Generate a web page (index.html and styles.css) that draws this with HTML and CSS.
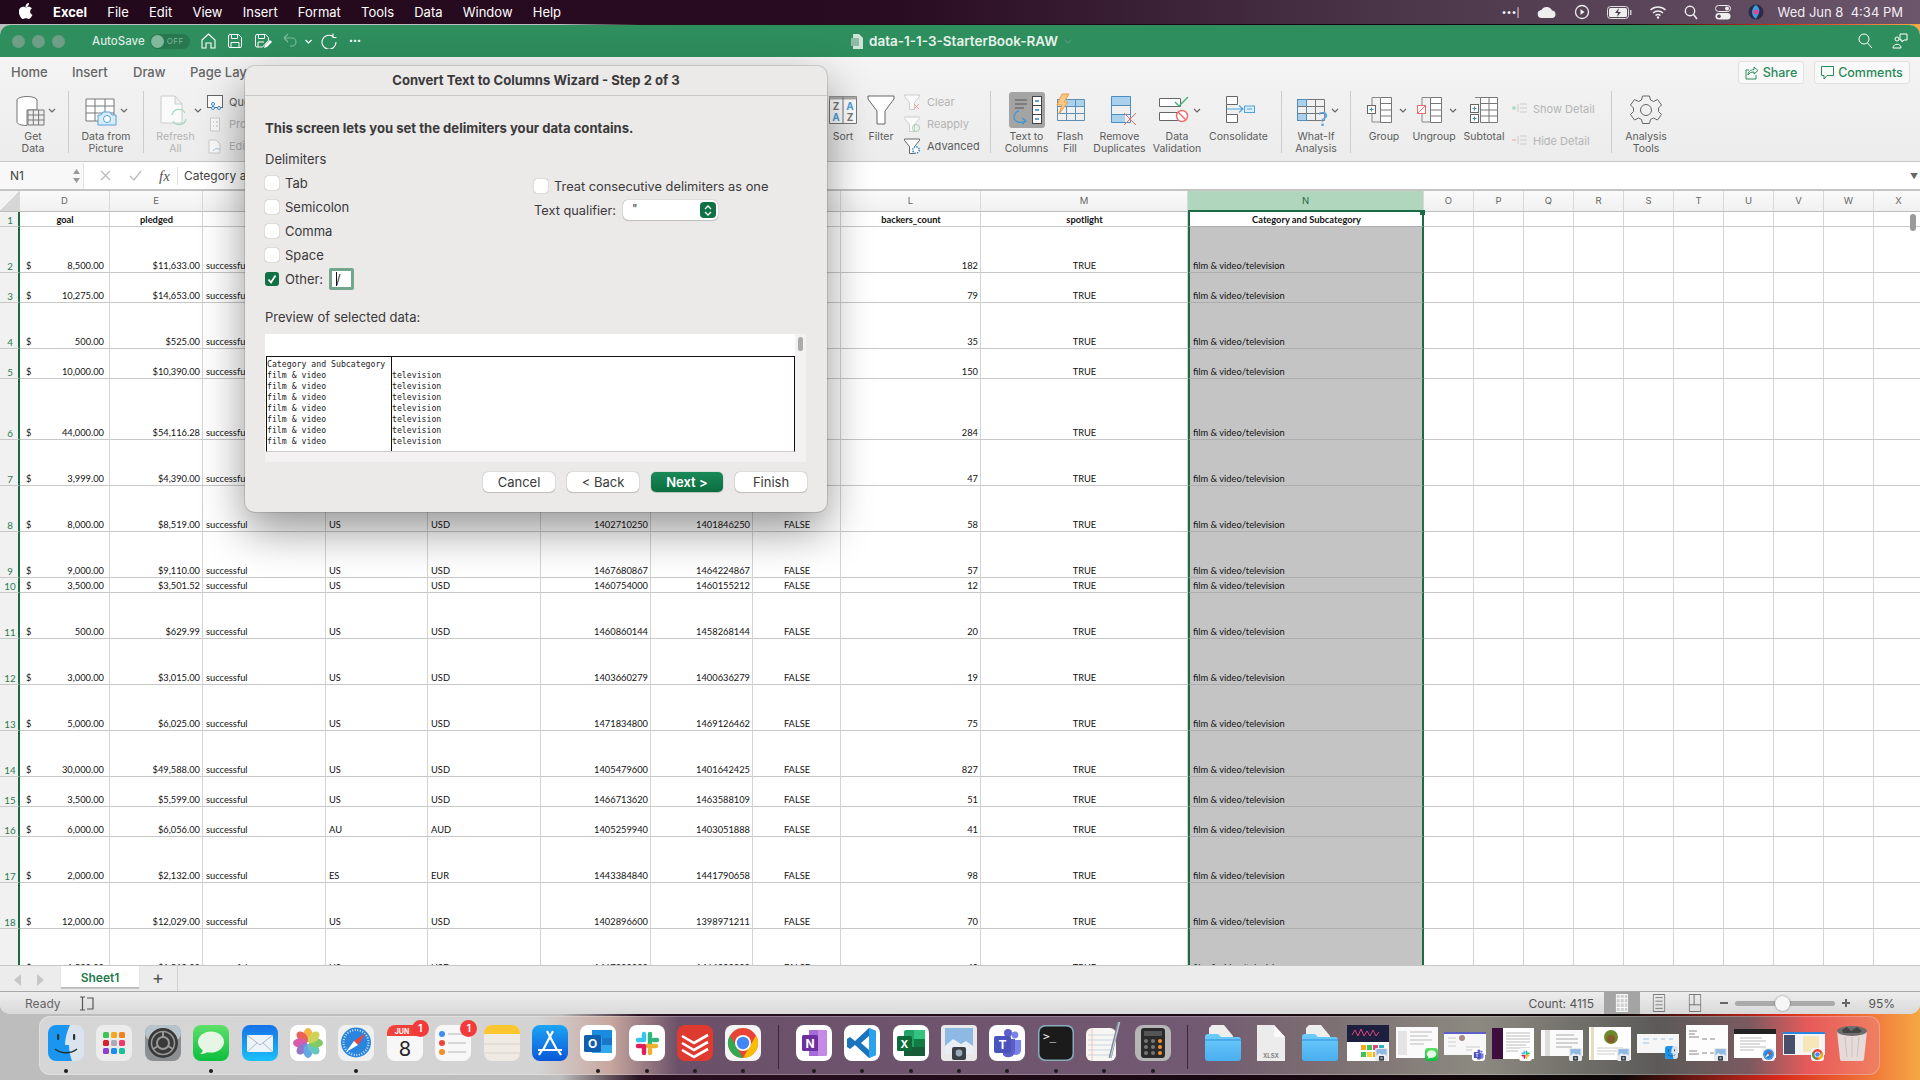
FILE: index.html
```html
<!DOCTYPE html>
<html>
<head>
<meta charset="utf-8">
<title>data-1-1-3-StarterBook-RAW</title>
<link rel="stylesheet" href="styles.css">
</head>
<body>

<!-- shared icons -->
<svg class="sprite" xmlns="http://www.w3.org/2000/svg">
  <defs>
    <linearGradient id="gBlue" x1="0" y1="0" x2="0" y2="1"><stop offset="0" stop-color="#1671e8"/><stop offset="1" stop-color="#1cc0fa"/></linearGradient>
    <linearGradient id="gGreen" x1="0" y1="0" x2="0" y2="1"><stop offset="0" stop-color="#5ee06a"/><stop offset="1" stop-color="#0cbe3e"/></linearGradient>
    <linearGradient id="gFolder" x1="0" y1="0" x2="0" y2="1"><stop offset="0" stop-color="#6cccfb"/><stop offset="1" stop-color="#4aaef0"/></linearGradient>
    <linearGradient id="gStore" x1="0" y1="0" x2="0" y2="1"><stop offset="0" stop-color="#1ca4f5"/><stop offset="1" stop-color="#0a58d8"/></linearGradient>
  </defs>
  <symbol id="i-finder" viewBox="0 0 36 36">
    <rect width="36" height="36" rx="8" fill="#dbe4ee"/>
    <path d="M8 0h14c-3 7-5 13-5 20h4c0 5 1 11 3 16H8a8 8 0 0 1-8-8V8a8 8 0 0 1 8-8z" fill="#1b96f0"/>
    <rect x="9" y="9" width="2.2" height="6" rx="1" fill="#233"/><rect x="25" y="9" width="2.2" height="6" rx="1" fill="#233"/>
    <path d="M7 24c6 5 16 5 22 0" fill="none" stroke="#233" stroke-width="1.4"/>
  </symbol>
  <symbol id="i-msg" viewBox="0 0 36 36">
    <rect width="36" height="36" rx="8" fill="url(#gGreen)"/>
    <ellipse cx="18" cy="17" rx="13" ry="10.5" fill="#e7f5e5"/><path d="M10 23c0 3-1 5-3 6 4 0 7-1 9-3z" fill="#e7f5e5"/>
  </symbol>
  <symbol id="i-safari" viewBox="0 0 36 36">
    <rect width="36" height="36" rx="8" fill="#f0f0f0"/>
    <circle cx="18" cy="17.5" r="15" fill="#2a86dd"/><circle cx="18" cy="17.5" r="12.5" fill="none" stroke="#cfe6fa" stroke-width="2" stroke-dasharray="1 1.6"/>
    <path d="M28 8 16 16l4 4z" fill="#f0443a"/><path d="M8 27l12-7-4-4z" fill="#fff"/>
  </symbol>
  <symbol id="i-slack" viewBox="0 0 36 36">
    <rect width="36" height="36" rx="8" fill="#fff"/>
    <g stroke-width="4.4" stroke-linecap="round" fill="none">
      <path d="M15 9v6M15 15H9" stroke="#36c5f0"/><path d="M21 9v10M28 15h-3" stroke="#2eb67d"/>
      <path d="M27 21h-8M21 28v-3" stroke="#ecb22e"/><path d="M9 21h3M15 21v7" stroke="#e01e5a"/>
    </g>
  </symbol>
  <symbol id="i-teams" viewBox="0 0 36 36">
    <rect width="36" height="36" rx="8" fill="#fff"/>
    <circle cx="26" cy="10" r="3.4" fill="#7b83eb"/><circle cx="19" cy="8" r="4" fill="#5b5fc7"/>
    <path d="M23 15h9v10a5 5 0 0 1-9 3z" fill="#7b83eb"/><path d="M14 14h12v13a7 7 0 0 1-12 3z" fill="#5b5fc7"/>
    <rect x="5" y="11" width="17" height="17" rx="2" fill="#4b53bc"/><text x="13.5" y="24" class="ic-t" fill="#fff" font-size="12" text-anchor="middle">T</text>
  </symbol>
  <symbol id="i-chrome" viewBox="0 0 36 36">
    <rect width="36" height="36" rx="8" fill="#f4f4f4"/>
    <circle cx="18" cy="18" r="15" fill="#e94335"/>
    <path d="M5 10.5 18 33A15 15 0 0 1 5 10.5z" fill="#33a852"/><path d="M18 33 31 10.5A15 15 0 0 1 18 33z" fill="#fbbc04"/>
    <circle cx="18" cy="18" r="8" fill="#fff"/><circle cx="18" cy="18" r="6.2" fill="#4285f4"/>
  </symbol>
  <symbol id="i-preview" viewBox="0 0 36 36">
    <rect width="36" height="36" rx="4" fill="#e8e8e8"/><rect x="4" y="3" width="28" height="18" fill="#8db9e4"/><path d="M4 21l8-7 8 5 5-3 7 5v8H4z" fill="#e8eef4"/>
    <rect x="11" y="22" width="14" height="13" rx="2" fill="#3b3f46"/><circle cx="18" cy="28" r="3.4" fill="#9ab"/>
  </symbol>
  <symbol id="i-folder" viewBox="0 0 36 36">
    <path d="M7 0h12l9 11v8H4V3z" fill="#eee"/>
    <path d="M0 12a3 3 0 0 1 3-3h10l3 3h17a3 3 0 0 1 3 3v18a3 3 0 0 1-3 3H3a3 3 0 0 1-3-3z" fill="url(#gFolder)"/>
    <path d="M0 15h36" stroke="#2f8fd8" stroke-width="1"/>
  </symbol>
</svg>

<div class="menubar">
  <svg class="apple" width="14" height="16" viewBox="0 0 14 16"><path d="M10 0c.1 1.200-.4 2.200-1 3-.7.8-1.700 1.300-2.600 1.200C6.300 3 6.800 2 7.400 1.300 8.100.5 9.200 0 10 0zM13.500 11.800c-.4.900-.6 1.300-1.100 2-.7 1-1.600 2.200-2.800 2.200-1 0-1.300-.7-2.700-.7s-1.700.7-2.700.7c-1.100 0-2-1.100-2.700-2.100C-.4 11-.600 7.600.6 5.800c.8-1.300 2.100-2 3.300-2 1.300 0 2 .7 3 .7 1 0 1.600-.7 3-.7 1.100 0 2.200.6 3 1.600-2.600 1.500-2.200 5.300.6 6.400z" fill="#fff"/></svg>
  <nav class="appmenu">
    <b>Excel</b><span>File</span><span>Edit</span><span>View</span><span>Insert</span><span>Format</span><span>Tools</span><span>Data</span><span>Window</span><span>Help</span>
  </nav>
  <div class="status-icons">
    <span class="dots3">•••|</span>
    <svg width="20" height="14" viewBox="0 0 20 14"><path d="M5 13a4 4 0 0 1-.6-8A6 6 0 0 1 15 5.500 3.800 3.800 0 0 1 15.500 13z" fill="#eee"/></svg>
    <svg width="16" height="16" viewBox="0 0 16 16"><circle cx="8" cy="8" r="6.500" fill="none" stroke="#eee" stroke-width="1.300"/><path d="M6.500 5v6l4-3z" fill="#eee"/></svg>
    <svg width="25" height="13" viewBox="0 0 25 13"><rect x=".5" y=".5" width="21" height="12" rx="3" fill="none" stroke="#ddd"/><rect x="2" y="2" width="18" height="9" rx="1.500" fill="#eee"/><path d="M12 2 8 7h3l-1 4 4-5h-3z" fill="#4a3a4a"/><rect x="23" y="4" width="1.500" height="5" fill="#ccc"/></svg>
    <svg width="18" height="14" viewBox="0 0 18 14"><path d="M1.500 5a11 11 0 0 1 15 0M4 8a7 7 0 0 1 10 0M6.500 10.500a3.500 3.500 0 0 1 5 0" fill="none" stroke="#eee" stroke-width="1.500"/><circle cx="9" cy="12.500" r="1.200" fill="#eee"/></svg>
    <svg width="14" height="15" viewBox="0 0 14 15"><circle cx="6" cy="6" r="4.700" fill="none" stroke="#eee" stroke-width="1.400"/><path d="M9.500 9.500 13 14" stroke="#eee" stroke-width="1.500"/></svg>
    <svg width="16" height="15" viewBox="0 0 16 15"><rect x=".5" y=".5" width="15" height="6" rx="3" fill="none" stroke="#eee"/><circle cx="12" cy="3.500" r="2" fill="#eee"/><rect x=".5" y="8" width="15" height="6.500" rx="3.200" fill="#eee"/><circle cx="4" cy="11.200" r="1.800" fill="#5a4659"/></svg>
    <svg width="16" height="16" viewBox="0 0 16 16"><circle cx="8" cy="8" r="7.500" fill="#2a2a4a"/><path d="M8 1c3 2 4 5 3 8-1 3-3 5-3 6-1-1-4-3-4-7 0-3 2-6 4-7z" fill="#3ba0d8"/><circle cx="8" cy="8" r="2.500" fill="#e83fa0"/></svg>
    <span class="clock">Wed Jun 8&nbsp;&nbsp;4:34 PM</span>
  </div>
</div>

<div class="window">
  <div class="titlebar">
    <span class="light"></span><span class="light"></span><span class="light"></span>
    <span class="autosave">AutoSave</span>
    <span class="toggle"><i></i>OFF</span>
    <svg class="qa q-home" width="15" height="16" viewBox="0 0 15 16"><path d="M1 7 7.500 1 14 7v8h-4v-5H5v5H1z" fill="none" stroke="#fff" stroke-width="1.100"/></svg>
    <svg class="qa q-save" width="14" height="14" viewBox="0 0 14 14"><path d="M.5 2A1.500 1.500 0 0 1 2 .5h8.500l3 3V12a1.500 1.500 0 0 1-1.500 1.500H2A1.500 1.500 0 0 1 .5 12zM3.500.5v4h6v-4M3 13.500v-5h8v5" fill="none" stroke="#fff"/></svg>
    <svg class="qa q-saveas" width="17" height="15" viewBox="0 0 17 15"><path d="M.5 2A1.500 1.500 0 0 1 2 .5h8.500l3 3v3l-6 6.500H2A1.500 1.500 0 0 1 .5 12zM3.500.5v4h6v-4M3 13v-5h6" fill="none" stroke="#fff"/><path d="M9 14l1-3 5-5 2 2-5 5z" fill="#fff"/></svg>
    <svg class="qa q-undo" width="14" height="15" viewBox="0 0 14 15"><path d="M1 5h8a4 4 0 0 1 0 8H7M1 5l4-4M1 5l4 4" fill="none" stroke="#7fbd9c" stroke-width="1.100"/></svg>
    <svg class="qa q-chev" width="7" height="5" viewBox="0 0 7 5"><path d="M.5 1l3 3 3-3" fill="none" stroke="#fff" stroke-width="1.200"/></svg>
    <svg class="qa q-redo" width="16" height="16" viewBox="0 0 16 16"><path d="M12 3.500A7 7 0 1 0 15 9M12 .5v4h3.500" fill="none" stroke="#fff" stroke-width="1.100"/></svg>
    <span class="qa q-more">•••</span>
    <div class="doc">
      <svg width="12" height="15" viewBox="0 0 12 15"><path d="M2 0h6l4 4v11H2z" fill="#cfe3d7"/><rect y="4" width="8" height="8" fill="#8fbaa3"/></svg>
      <span>data-1-1-3-StarterBook-RAW</span>
      <svg width="8" height="5" viewBox="0 0 8 5"><path d="M.5 1l3.500 3 3.500-3" fill="none" stroke="#5aa67f"/></svg>
    </div>
    <svg class="qa q-search" width="15" height="16" viewBox="0 0 15 16"><circle cx="6" cy="6" r="5" fill="none" stroke="#fff"/><path d="M9.500 10 14 15" stroke="#fff"/></svg>
    <svg class="qa q-people" width="16" height="16" viewBox="0 0 16 16"><circle cx="5" cy="6" r="2" fill="none" stroke="#fff"/><path d="M1 15c0-5 8-5 8 0zM8 1h7v6h-3l-2 2V7H8z" fill="none" stroke="#fff"/></svg>
  </div>

  <div class="ribbon">
    <div class="tabs">
      <span class="t-home">Home</span><span class="t-insert">Insert</span><span class="t-draw">Draw</span><span class="t-page">Page Layout</span><span class="t-form">Formulas</span><span class="t-data">Data</span><span class="t-review">Review</span><span class="t-view">View</span><span class="t-tell">Tell me</span>
      <span class="tab-btns">
        <button class="rbtn b-share"><svg width="14" height="14" viewBox="0 0 14 14"><path d="M9 1l4 3.500L9 8V6C6 6 4 7 3 9c0-3 2-5 6-5.500zM11 9v4H1V4h3" fill="none" stroke="#2a8a5a"/></svg>Share</button>
        <button class="rbtn b-comments"><svg width="13" height="14" viewBox="0 0 13 14"><path d="M.5.500h12v9H6l-3 3.500V9.500H.5z" fill="none" stroke="#2a8a5a"/></svg>Comments</button>
      </span>
    </div>
    <div class="tools">
      <div class="rb w-getdata">
        <svg width="50" height="38" viewBox="0 0 50 38"><ellipse cx="19" cy="10" rx="10" ry="3.500" fill="#fff" stroke="#777"/><path d="M9 10v22c0 2 4 3.500 10 3.500V20h10V10" fill="#fff" stroke="#777"/><path d="M20 20h16v15H20zM20 25h16M20 30h16M25.300 20v15M30.600 20v15" fill="#eee" stroke="#777"/><path d="M41 19l3 3 3-3" fill="none" stroke="#666" stroke-width="1.200"/></svg>
        <label>Get<br>Data</label>
      </div>
      <i class="sep"></i>
      <div class="rb w-picture">
        <svg width="56" height="38" viewBox="0 0 56 38"><path d="M8 9h28v22H8zM8 16h28M8 23h28M17 9v22M27 9v22" fill="#fff" stroke="#777"/><path d="M20 25h3l2-3h7l2 3h4v10H20z" fill="#d8ecfa" stroke="#4fa3dc"/><circle cx="29" cy="29" r="3.500" fill="#fff" stroke="#4fa3dc"/><path d="M43 19l3 3 3-3" fill="none" stroke="#666" stroke-width="1.200"/></svg>
        <label>Data from<br>Picture</label>
      </div>
      <i class="sep"></i>
      <div class="rb w-refresh dim">
        <svg width="60" height="38" viewBox="0 0 60 38"><path d="M15 6h14l7 8v19H15zM29 6v8h7" fill="#fafafa" stroke="#ccc"/><path d="M26 25a7 7 0 0 1 13-2M40 29a7 7 0 0 1-13 2" fill="none" stroke="#a9dcc0" stroke-width="1.400"/><path d="M49 19l3 3 3-3" fill="none" stroke="#666" stroke-width="1.200"/></svg>
        <label>Refresh<br>All</label>
      </div>
      <div class="stack w-query">
        <div class="s-row"><svg width="16" height="15" viewBox="0 0 16 15"><rect x=".5" y=".5" width="15" height="12" fill="#fff" stroke="#666"/><circle cx="6" cy="9" r="1.500" fill="#fff" stroke="#3a8cc8"/><circle cx="6" cy="13" r="1.500" fill="#fff" stroke="#3a8cc8"/><circle cx="12" cy="13" r="1.500" fill="#fff" stroke="#3a8cc8"/></svg><span>Queries &amp; Connections</span></div>
        <div class="s-row dim"><svg width="16" height="15" viewBox="0 0 16 15"><path d="M3.500 1h9v13h-9z" fill="#fafafa" stroke="#ccc"/><path d="M6 5h1M6 9h1M9 5h2M9 9h2" stroke="#bbb"/></svg><span>Properties</span></div>
        <div class="s-row dim"><svg width="16" height="15" viewBox="0 0 16 15"><path d="M2 1h7l4 4v9H2z" fill="#fafafa" stroke="#ccc"/><path d="M6 12c2-3 5-3 7-1" fill="none" stroke="#9cc5e2"/></svg><span>Edit Links</span></div>
      </div>

      <div class="rb w-sort">
        <svg width="37" height="38" viewBox="0 0 37 38"><path d="M4.500 6.500h27v27h-27z" fill="#fff" stroke="#777"/><rect x="4.500" y="6.500" width="27" height="3" fill="#aaa"/><path d="M18 6.500v27" stroke="#777"/><text x="11" y="20" class="ic-t" font-size="10" fill="#777" text-anchor="middle">Z</text><text x="11" y="31" class="ic-t" font-size="10" fill="#4fa3dc" text-anchor="middle">A</text><text x="25" y="20" class="ic-t" font-size="10" fill="#4fa3dc" text-anchor="middle">A</text><text x="25" y="31" class="ic-t" font-size="10" fill="#777" text-anchor="middle">Z</text></svg>
        <label>Sort</label>
      </div>
      <div class="rb w-filter">
        <svg width="38" height="38" viewBox="0 0 38 38"><path d="M6 6h26v3L23 21v13h-8V21L6 9z" fill="#fff" stroke="#666"/></svg>
        <label>Filter</label>
      </div>
      <div class="stack w-clear">
        <div class="s-row dim"><svg width="17" height="17" viewBox="0 0 17 17"><path d="M.5 1h15v1.500l-5 6v7h-5v-7l-5-6z" fill="#fafafa" stroke="#ccc"/><path d="M10 10l5 5M15 10l-5 5" stroke="#f2a0a0"/></svg><span>Clear</span></div>
        <div class="s-row dim"><svg width="17" height="17" viewBox="0 0 17 17"><path d="M.5 1h15v1.500l-5 6v7h-5v-7l-5-6z" fill="#fafafa" stroke="#ccc"/><circle cx="12" cy="12" r="3.500" fill="none" stroke="#96d4b0"/></svg><span>Reapply</span></div>
        <div class="s-row"><svg width="17" height="17" viewBox="0 0 17 17"><path d="M.5 1h15v1.500l-5 6v7h-5v-7l-5-6z" fill="#fff" stroke="#666"/><circle cx="12" cy="12" r="3.200" fill="#fff" stroke="#3a8cc8" stroke-width="1.500" stroke-dasharray="1.500 1"/></svg><span>Advanced</span></div>
      </div>
      <i class="sep"></i>

      <div class="rb w-t2c">
        <svg class="t2c-on" width="36" height="36" viewBox="0 0 36 36"><path d="M6 8h12M6 12h12M6 16h9" stroke="#555"/><rect x="23.500" y="4.500" width="9" height="27" fill="#fff" stroke="#444"/><path d="M23.500 13.500h9M23.500 22.500h9" stroke="#444"/><path d="M26 9h4M26 18h4M26 27h4" stroke="#2b84c6" stroke-width="1.300"/><path d="M10 19c-5 1-6 6-4 9 2 3 7 3 11 1M13 26l4 3-4 3" fill="none" stroke="#3c95d6" stroke-width="1.300"/></svg>
        <label>Text to<br>Columns</label>
      </div>
      <div class="rb w-flash">
        <svg width="44" height="38" viewBox="0 0 44 38"><rect x="18" y="9" width="18" height="7" fill="#a9d1ee"/><path d="M9.500 9.500h27v21h-27zM9.500 16.500h27M9.500 23.500h27M18.500 16v15M27.500 9.500v21" fill="none" stroke="#5f8fb4"/><path d="M14 4h7l-5 8h4l-9 12 3-9H9z" fill="#fbc98a" stroke="#f0993a"/></svg>
        <label>Flash<br>Fill</label>
      </div>
      <div class="rb w-remove">
        <svg width="54" height="38" viewBox="0 0 54 38"><rect x="18" y="6" width="20" height="9" fill="#a9d1ee"/><rect x="18" y="24" width="14" height="9" fill="#a9d1ee"/><path d="M18.500 6.500h19v26h-19zM18.500 15.500h19M18.500 24.500h19" fill="none" stroke="#4f8fc0"/><path d="M31 23l12 12M43 23 31 35" stroke="#ef6a6a"/></svg>
        <label>Remove<br>Duplicates</label>
      </div>
      <div class="rb w-valid">
        <svg width="60" height="38" viewBox="0 0 60 38"><path d="M12.500 8.500h21v8h-21zM12.500 22.500h21v8h-21z" fill="#fff" stroke="#666"/><path d="M28 12l4 4 9-9" fill="none" stroke="#3bb273" stroke-width="1.300"/><circle cx="35" cy="26" r="5.500" fill="#fff" stroke="#ef6a6a" stroke-width="1.400"/><path d="M31 22l8 8" stroke="#ef6a6a" stroke-width="1.400"/><path d="M47 19l3 3 3-3" fill="none" stroke="#666" stroke-width="1.200"/></svg>
        <label>Data<br>Validation</label>
      </div>
      <div class="rb w-consol">
        <svg width="64" height="38" viewBox="0 0 64 38"><path d="M19.500 6.500h11v8h-11M19.500 14.500v10M19.500 24.500h11v8h-11zM19.500 6.500v8" fill="#fff" stroke="#666"/><path d="M20 19h16M32 15.500l4 3.500-4 3.500" fill="none" stroke="#4fa3dc" stroke-width="1.200"/><rect x="37.500" y="16" width="10" height="6.500" fill="#d8ecfa" stroke="#4fa3dc"/><path d="M40 19h5" stroke="#4fa3dc"/></svg>
        <label>Consolidate</label>
      </div>
      <i class="sep sep-whatif"></i>
      <div class="rb w-whatif">
        <svg width="67" height="38" viewBox="0 0 67 38"><rect x="14" y="9" width="9" height="7" fill="#a9d1ee"/><rect x="14" y="23" width="9" height="8" fill="#a9d1ee"/><path d="M14.500 9.500h27v21h-27zM14.500 16.500h27M14.500 23.500h27M23.500 9.500v21M32.500 9.500v21" fill="none" stroke="#777"/><rect x="14.500" y="9.500" width="9" height="21" fill="none" stroke="#4f8fc0"/><text x="40" y="36" class="ic-q" font-size="22" fill="#5aa7dd" text-anchor="middle">?</text><path d="M49 19l3 3 3-3" fill="none" stroke="#666" stroke-width="1.200"/></svg>
        <label>What-If<br>Analysis</label>
      </div>
      <i class="sep sep-group"></i>
      <div class="rb w-group">
        <svg width="50" height="38" viewBox="0 0 50 38"><path d="M13 7.500h8M13 7.500v8M13 24v8h8" fill="none" stroke="#888"/><rect x="8.500" y="15.500" width="8" height="8" fill="#fff" stroke="#666"/><path d="M10.500 19.500h4M12.500 17.500v4" stroke="#3a8cc8"/><path d="M21.500 7.500h11v25h-11zM21.500 13.500h11M21.500 20h11M21.500 26h11" fill="#fff" stroke="#777"/><path d="M41 19l3 3 3-3" fill="none" stroke="#666" stroke-width="1.200"/></svg>
        <label>Group</label>
      </div>
      <div class="rb w-group">
        <svg width="50" height="38" viewBox="0 0 50 38"><path d="M13 7.500h8M13 7.500v8M13 24v8h8" fill="none" stroke="#888"/><rect x="8.500" y="15.500" width="8" height="8" fill="#fff" stroke="#ef6a6a"/><path d="M9 23 16 16" stroke="#ef6a6a"/><path d="M21.500 7.500h11v25h-11zM21.500 13.500h11M21.500 20h11M21.500 26h11" fill="#fff" stroke="#777"/><path d="M41 19l3 3 3-3" fill="none" stroke="#666" stroke-width="1.200"/></svg>
        <label>Ungroup</label>
      </div>
      <div class="rb w-group">
        <svg width="50" height="38" viewBox="0 0 50 38"><path d="M16 7.500h7v7M16 24.500v8" fill="none" stroke="#888"/><rect x="11.500" y="14.500" width="8" height="8" fill="#fff" stroke="#666"/><rect x="11.500" y="24.500" width="8" height="8" fill="#fff" stroke="#666"/><path d="M13.500 18.500h4M15.500 16.500v4M13.500 28.500h4M15.500 26.500v4" stroke="#3a8cc8"/><path d="M21.500 7.500h17v25h-17zM21.500 13.500h17M21.500 20h17M21.500 26h17M30 7.500v25" fill="#fff" stroke="#777"/></svg>
        <label>Subtotal</label>
      </div>
      <div class="stack stack-wide w-detail">
        <div class="s-row dim"><svg width="16" height="12" viewBox="0 0 16 12"><path d="M0 5h4M2 3v4" stroke="#8cd0aa"/><path d="M8 1h7M8 5h7M8 9h7M6 1v8" stroke="#ccc"/></svg><span>Show Detail</span></div>
        <div class="s-row dim"><svg width="16" height="12" viewBox="0 0 16 12"><path d="M0 5h4" stroke="#f2a0a0"/><path d="M8 1h7M8 5h7M8 9h7M6 1v8" stroke="#ccc"/></svg><span>Hide Detail</span></div>
      </div>
      <i class="sep"></i>
      <div class="rb w-analysis">
        <svg width="66" height="38" viewBox="0 0 66 38"><path d="M29.500 6h7l1 4 3 1.500 4-2 4 5.500-3 3v3.500l3 3-4 5.500-4-2-3 1.500-1 4h-7l-1-4-3-1.500-4 2-4-5.500 3-3V18l-3-3 4-5.500 4 2 3-1.500z" fill="none" stroke="#666"/><circle cx="33" cy="20" r="5.500" fill="none" stroke="#666"/></svg>
        <label>Analysis<br>Tools</label>
      </div>
    </div>
  </div>

  <div class="formula">
    <div class="namebox">N1<span class="stepper"><svg width="7" height="14" viewBox="0 0 7 14"><path d="M3.500 0 7 5H0zM3.500 14 0 9h7z" fill="#999"/></svg></span></div>
    <svg class="f-x" width="11" height="11" viewBox="0 0 11 11"><path d="M1 1l9 9M10 1l-9 9" stroke="#bbb" stroke-width="1.300"/></svg>
    <svg class="f-ok" width="13" height="11" viewBox="0 0 13 11"><path d="M1 6l4 4 7-9" fill="none" stroke="#bbb" stroke-width="1.300"/></svg>
    <span class="f-fx">fx</span>
    <span class="f-text">Category and Subcategory</span>
    <span class="f-open">▼</span>
  </div>

  <div class="sheet">
    <table class="grid">
      <colgroup>
        <col class="c-row"><col class="c-d"><col class="c-e"><col class="c-f"><col class="c-g"><col class="c-h"><col class="c-i"><col class="c-j"><col class="c-k"><col class="c-l"><col class="c-m"><col class="c-n">
        <col class="c-o"><col class="c-o"><col class="c-o"><col class="c-o"><col class="c-o"><col class="c-o"><col class="c-o"><col class="c-o"><col class="c-o"><col class="c-o">
      </colgroup>
      <tr class="head">
        <th class="corner"></th><th>D</th><th>E</th><th>F</th><th>G</th><th>H</th><th>I</th><th>J</th><th>K</th><th>L</th><th>M</th><th class="head-n">N</th><th>O</th><th>P</th><th>Q</th><th>R</th><th>S</th><th>T</th><th>U</th><th>V</th><th>W</th><th>X</th>
      </tr>
      <tr class="h15 names"><th>1</th><td>goal</td><td>pledged</td><td></td><td></td><td></td><td></td><td></td><td></td><td>backers_count</td><td>spotlight</td><td class="sel first">Category and Subcategory</td><td class="rest" colspan="10"></td></tr>
      <tr class="h46"><th>2</th><td class="cur"><span>$</span>8,500.00</td><td class="num">$11,633.00</td><td>successful</td><td></td><td></td><td></td><td></td><td></td><td class="num">182</td><td class="mid">TRUE</td><td class="sel">film &amp; video/television</td><td class="rest" colspan="10"></td></tr>
      <tr class="h30"><th>3</th><td class="cur"><span>$</span>10,275.00</td><td class="num">$14,653.00</td><td>successful</td><td></td><td></td><td></td><td></td><td></td><td class="num">79</td><td class="mid">TRUE</td><td class="sel">film &amp; video/television</td><td class="rest" colspan="10"></td></tr>
      <tr class="h46"><th>4</th><td class="cur"><span>$</span>500.00</td><td class="num">$525.00</td><td>successful</td><td></td><td></td><td></td><td></td><td></td><td class="num">35</td><td class="mid">TRUE</td><td class="sel">film &amp; video/television</td><td class="rest" colspan="10"></td></tr>
      <tr class="h30"><th>5</th><td class="cur"><span>$</span>10,000.00</td><td class="num">$10,390.00</td><td>successful</td><td></td><td></td><td></td><td></td><td></td><td class="num">150</td><td class="mid">TRUE</td><td class="sel">film &amp; video/television</td><td class="rest" colspan="10"></td></tr>
      <tr class="h61"><th>6</th><td class="cur"><span>$</span>44,000.00</td><td class="num">$54,116.28</td><td>successful</td><td></td><td></td><td></td><td></td><td></td><td class="num">284</td><td class="mid">TRUE</td><td class="sel">film &amp; video/television</td><td class="rest" colspan="10"></td></tr>
      <tr class="h46"><th>7</th><td class="cur"><span>$</span>3,999.00</td><td class="num">$4,390.00</td><td>successful</td><td></td><td></td><td></td><td></td><td></td><td class="num">47</td><td class="mid">TRUE</td><td class="sel">film &amp; video/television</td><td class="rest" colspan="10"></td></tr>
      <tr class="h46"><th>8</th><td class="cur"><span>$</span>8,000.00</td><td class="num">$8,519.00</td><td>successful</td><td>US</td><td>USD</td><td class="num">1402710250</td><td class="num">1401846250</td><td class="mid">FALSE</td><td class="num">58</td><td class="mid">TRUE</td><td class="sel">film &amp; video/television</td><td class="rest" colspan="10"></td></tr>
      <tr class="h46"><th>9</th><td class="cur"><span>$</span>9,000.00</td><td class="num">$9,110.00</td><td>successful</td><td>US</td><td>USD</td><td class="num">1467680867</td><td class="num">1464224867</td><td class="mid">FALSE</td><td class="num">57</td><td class="mid">TRUE</td><td class="sel">film &amp; video/television</td><td class="rest" colspan="10"></td></tr>
      <tr class="h15"><th>10</th><td class="cur"><span>$</span>3,500.00</td><td class="num">$3,501.52</td><td>successful</td><td>US</td><td>USD</td><td class="num">1460754000</td><td class="num">1460155212</td><td class="mid">FALSE</td><td class="num">12</td><td class="mid">TRUE</td><td class="sel">film &amp; video/television</td><td class="rest" colspan="10"></td></tr>
      <tr class="h46"><th>11</th><td class="cur"><span>$</span>500.00</td><td class="num">$629.99</td><td>successful</td><td>US</td><td>USD</td><td class="num">1460860144</td><td class="num">1458268144</td><td class="mid">FALSE</td><td class="num">20</td><td class="mid">TRUE</td><td class="sel">film &amp; video/television</td><td class="rest" colspan="10"></td></tr>
      <tr class="h46"><th>12</th><td class="cur"><span>$</span>3,000.00</td><td class="num">$3,015.00</td><td>successful</td><td>US</td><td>USD</td><td class="num">1403660279</td><td class="num">1400636279</td><td class="mid">FALSE</td><td class="num">19</td><td class="mid">TRUE</td><td class="sel">film &amp; video/television</td><td class="rest" colspan="10"></td></tr>
      <tr class="h46"><th>13</th><td class="cur"><span>$</span>5,000.00</td><td class="num">$6,025.00</td><td>successful</td><td>US</td><td>USD</td><td class="num">1471834800</td><td class="num">1469126462</td><td class="mid">FALSE</td><td class="num">75</td><td class="mid">TRUE</td><td class="sel">film &amp; video/television</td><td class="rest" colspan="10"></td></tr>
      <tr class="h46"><th>14</th><td class="cur"><span>$</span>30,000.00</td><td class="num">$49,588.00</td><td>successful</td><td>US</td><td>USD</td><td class="num">1405479600</td><td class="num">1401642425</td><td class="mid">FALSE</td><td class="num">827</td><td class="mid">TRUE</td><td class="sel">film &amp; video/television</td><td class="rest" colspan="10"></td></tr>
      <tr class="h30"><th>15</th><td class="cur"><span>$</span>3,500.00</td><td class="num">$5,599.00</td><td>successful</td><td>US</td><td>USD</td><td class="num">1466713620</td><td class="num">1463588109</td><td class="mid">FALSE</td><td class="num">51</td><td class="mid">TRUE</td><td class="sel">film &amp; video/television</td><td class="rest" colspan="10"></td></tr>
      <tr class="h30"><th>16</th><td class="cur"><span>$</span>6,000.00</td><td class="num">$6,056.00</td><td>successful</td><td>AU</td><td>AUD</td><td class="num">1405259940</td><td class="num">1403051888</td><td class="mid">FALSE</td><td class="num">41</td><td class="mid">TRUE</td><td class="sel">film &amp; video/television</td><td class="rest" colspan="10"></td></tr>
      <tr class="h46"><th>17</th><td class="cur"><span>$</span>2,000.00</td><td class="num">$2,132.00</td><td>successful</td><td>ES</td><td>EUR</td><td class="num">1443384840</td><td class="num">1441790658</td><td class="mid">FALSE</td><td class="num">98</td><td class="mid">TRUE</td><td class="sel">film &amp; video/television</td><td class="rest" colspan="10"></td></tr>
      <tr class="h46"><th>18</th><td class="cur"><span>$</span>12,000.00</td><td class="num">$12,029.00</td><td>successful</td><td>US</td><td>USD</td><td class="num">1402896600</td><td class="num">1398971211</td><td class="mid">FALSE</td><td class="num">70</td><td class="mid">TRUE</td><td class="sel">film &amp; video/television</td><td class="rest" colspan="10"></td></tr>
      <tr class="h46"><th>19</th><td class="cur"><span>$</span>1,500.00</td><td class="num">$1,510.00</td><td>successful</td><td>US</td><td>USD</td><td class="num">1467000000</td><td class="num">1464000000</td><td class="mid">FALSE</td><td class="num">40</td><td class="mid">TRUE</td><td class="sel">film &amp; video/television</td><td class="rest" colspan="10"></td></tr>
    </table>
    <i class="fill-handle"></i>
    <i class="scroll-thumb"></i>
  </div>

  <div class="tabbar">
    <svg class="tab-nav" width="30" height="12" viewBox="0 0 30 12"><path d="M7 0v12L0 6zM23 0v12l7-6z" fill="#c6c6c6"/></svg>
    <span class="sheet-tab">Sheet1</span>
    <span class="sheet-add">+</span>
  </div>

  <div class="statusbar">
    <span class="ready">Ready</span>
    <svg width="15" height="15" viewBox="0 0 15 15"><path d="M1 1h5M3.500 1v13M1 14h5M8 2h6v11H8" fill="none" stroke="#555" stroke-width="1.200"/></svg>
    <span class="count">Count: 4115</span>
    <span class="view on"><svg width="14" height="20" viewBox="0 0 14 20"><path d="M.5.500h13v19H.5zM.5 5h13M.5 10h13M.5 15h13M5 .5v19M9.500.5v19" fill="#d0d0d0" stroke="#fff"/></svg></span>
    <span class="view"><svg width="14" height="20" viewBox="0 0 14 20"><path d="M.5.500h13v19H.5z" fill="none" stroke="#666"/><path d="M3 4h8M3 8h8M3 12h8M3 16h8" stroke="#777"/></svg></span>
    <span class="view"><svg width="14" height="20" viewBox="0 0 14 20"><path d="M.5.500h13v19H.5zM.5 12h13M6 .5V12" fill="none" stroke="#666"/></svg></span>
    <span class="zoom-minus"></span>
    <span class="slider"><i></i></span>
    <span class="zoom-plus"></span>
    <span class="zoom-val">95%</span>
  </div>
</div>

<div class="dialog">
  <div class="dlg-title">Convert Text to Columns Wizard - Step 2 of 3</div>
  <div class="dlg-body">
    <p class="dlg-head">This screen lets you set the delimiters your data contains.</p>
    <p class="dlg-label">Delimiters</p>
    <div class="dlg-options">
      <div class="col-left">
        <div class="opt"><i class="check"></i>Tab</div>
        <div class="opt"><i class="check"></i>Semicolon</div>
        <div class="opt"><i class="check"></i>Comma</div>
        <div class="opt"><i class="check"></i>Space</div>
        <div class="opt"><i class="check checked"><svg width="14" height="14" viewBox="0 0 14 14"><path d="M3.500 7.500l2.500 3 4.500-7" fill="none" stroke="#fff" stroke-width="1.800"/></svg></i>Other:<span class="other-input"><i></i>/</span></div>
      </div>
      <div class="col-right">
        <div class="opt"><i class="check"></i>Treat consecutive delimiters as one</div>
        <div class="opt qual">Text qualifier:
          <span class="select">"<i class="select-btn"><svg width="8" height="13" viewBox="0 0 8 13"><path d="M1 5l3-3 3 3M1 8l3 3 3-3" fill="none" stroke="#fff" stroke-width="1.300"/></svg></i></span>
        </div>
      </div>
    </div>
    <p class="dlg-label preview-label">Preview of selected data:</p>
    <div class="preview">
      <div class="pv-area">
        <div class="pv-table">
          <div class="pv-col pv-first">Category and Subcategory<br>film &amp; video<br>film &amp; video<br>film &amp; video<br>film &amp; video<br>film &amp; video<br>film &amp; video<br>film &amp; video</div>
          <div class="pv-col"><br>television<br>television<br>television<br>television<br>television<br>television<br>television</div>
        </div>
      </div>
      <i class="pv-thumb"></i>
    </div>
    <div class="dlg-buttons">
      <button class="btn">Cancel</button>
      <button class="btn">&lt; Back</button>
      <button class="btn next">Next &gt;</button>
      <button class="btn">Finish</button>
    </div>
  </div>
</div>

<div class="dock">
  <div class="app on"><svg viewBox="0 0 36 36"><use href="#i-finder"/></svg></div>
  <div class="app"><svg viewBox="0 0 36 36"><rect width="36" height="36" rx="8" fill="#ececec"/><g><rect x="7" y="7" width="6" height="6" rx="1.500" fill="#3cc45a"/><rect x="15" y="7" width="6" height="6" rx="1.500" fill="#f5a623"/><rect x="23" y="7" width="6" height="6" rx="1.500" fill="#f58220"/><rect x="7" y="15" width="6" height="6" rx="1.500" fill="#d9202a"/><rect x="15" y="15" width="6" height="6" rx="1.500" fill="#aab"/><rect x="23" y="15" width="6" height="6" rx="1.500" fill="#ee3a6a"/><rect x="7" y="23" width="6" height="6" rx="1.500" fill="#8a3fd0"/><rect x="15" y="23" width="6" height="6" rx="1.500" fill="#1c8cf0"/><rect x="23" y="23" width="6" height="6" rx="1.500" fill="#1fc09a"/></g></svg></div>
  <div class="app"><svg viewBox="0 0 36 36"><rect width="36" height="36" rx="8" fill="#8b8f92"/><rect width="36" height="16" rx="8" fill="#b6c4cc"/><circle cx="18" cy="18" r="15" fill="#3a3a3a"/><circle cx="18" cy="18" r="11.500" fill="none" stroke="#999" stroke-width="1.500"/><circle cx="18" cy="18" r="6" fill="none" stroke="#999" stroke-width="2"/><path d="M18 12V6.500M23 21l5 3M13 21l-5 3" stroke="#999" stroke-width="2"/></svg></div>
  <div class="app on"><svg viewBox="0 0 36 36"><use href="#i-msg"/></svg></div>
  <div class="app"><svg viewBox="0 0 36 36"><rect width="36" height="36" rx="8" fill="url(#gBlue)"/><rect x="5" y="10" width="26" height="17" rx="1.500" fill="#eef3f8"/><path d="M5 10l13 10 13-10M5 27l10-9M31 27l-10-9" fill="none" stroke="#a8bacb"/></svg></div>
  <div class="app"><svg viewBox="0 0 36 36"><rect width="36" height="36" rx="8" fill="#fff"/><g opacity=".85"><ellipse cx="18" cy="10" rx="4.500" ry="7" fill="#f6a623"/><ellipse cx="18" cy="10" rx="4.500" ry="7" fill="#e8483a" transform="rotate(-45 18 18)"/><ellipse cx="18" cy="10" rx="4.500" ry="7" fill="#d3409a" transform="rotate(-90 18 18)"/><ellipse cx="18" cy="10" rx="4.500" ry="7" fill="#7f5fc4" transform="rotate(-135 18 18)"/><ellipse cx="18" cy="10" rx="4.500" ry="7" fill="#4b9be0" transform="rotate(180 18 18)"/><ellipse cx="18" cy="10" rx="4.500" ry="7" fill="#4dbdb0" transform="rotate(135 18 18)"/><ellipse cx="18" cy="10" rx="4.500" ry="7" fill="#6cc04a" transform="rotate(90 18 18)"/><ellipse cx="18" cy="10" rx="4.500" ry="7" fill="#c5cc3a" transform="rotate(45 18 18)"/></g></svg></div>
  <div class="app on"><svg viewBox="0 0 36 36"><use href="#i-safari"/></svg></div>
  <div class="app"><svg viewBox="0 0 36 36"><rect width="36" height="36" rx="8" fill="#f7f7f7"/><path d="M0 11V8a8 8 0 0 1 8-8h20a8 8 0 0 1 8 8v3z" fill="#f2413b"/><text x="15" y="9" class="ic-t" font-size="7" fill="#fff" text-anchor="middle">JUN</text><text x="18" y="31" class="ic-n" font-size="20" fill="#222" text-anchor="middle">8</text></svg><span class="badge">1</span></div>
  <div class="app"><svg viewBox="0 0 36 36"><rect width="36" height="36" rx="8" fill="#f7f7f7"/><circle cx="7" cy="9" r="3" fill="#3f8cf0"/><circle cx="7" cy="18" r="3" fill="#f0443a"/><circle cx="7" cy="27" r="3" fill="#f58f28"/><path d="M13 9h18M13 18h18M13 27h18" stroke="#ccc" stroke-width="1.500"/></svg><span class="badge">1</span></div>
  <div class="app"><svg viewBox="0 0 36 36"><rect width="36" height="36" rx="8" fill="#efebe4"/><path d="M0 9V8a8 8 0 0 1 8-8h20a8 8 0 0 1 8 8v1z" fill="#fbc62e"/><path d="M0 19h36M0 28h36" stroke="#d9d5cd"/></svg></div>
  <div class="app"><svg viewBox="0 0 36 36"><rect width="36" height="36" rx="8" fill="url(#gStore)"/><path d="M21 6 11 25M15 6l10 19M6 25h24M26 25l3 5M10 25l-3 5" fill="none" stroke="#fff" stroke-width="2.200"/></svg></div>
  <div class="app on"><svg viewBox="0 0 36 36"><rect width="36" height="36" rx="8" fill="#fff"/><rect x="12" y="5" width="20" height="8" fill="#1a8ce0"/><rect x="12" y="13" width="20" height="15" fill="#31a8ee"/><rect x="22" y="13" width="10" height="7" fill="#1976c8"/><rect x="4" y="10" width="17" height="17" rx="1.500" fill="#0f5fae"/><text x="12.500" y="23" class="ic-t" font-size="12" fill="#fff" text-anchor="middle">O</text></svg></div>
  <div class="app on"><svg viewBox="0 0 36 36"><use href="#i-slack"/></svg></div>
  <div class="app on"><svg viewBox="0 0 36 36"><rect width="36" height="36" rx="8" fill="#de3a2f"/><path d="M5 11l12 7 14-8M5 18l12 7 14-8M5 25l12 7 14-8" fill="none" stroke="#fff" stroke-width="2.600"/></svg></div>
  <div class="app on"><svg viewBox="0 0 36 36"><use href="#i-chrome"/></svg></div>
  <i class="dock-sep"></i>
  <div class="app on"><svg viewBox="0 0 36 36"><rect width="36" height="36" rx="8" fill="#fff"/><path d="M13 5h16a2 2 0 0 1 2 2v22a2 2 0 0 1-2 2H13z" fill="#a56bd6"/><path d="M22 5h7a2 2 0 0 1 2 2v22a2 2 0 0 1-2 2h-7z" fill="#c48be6"/><rect x="6" y="10" width="16" height="16" rx="1.500" fill="#6d2f9e"/><text x="14" y="22.500" class="ic-t" font-size="12" fill="#fff" text-anchor="middle">N</text></svg></div>
  <div class="app on"><svg viewBox="0 0 36 36"><rect width="36" height="36" rx="8" fill="#fff"/><path d="M25 3l7 3v24l-7 3L11 20l-5 4-3-2v-8l3-2 5 4zM25 11l-8 7 8 7z" fill="#1a74bd"/><path d="M25 3l7 3v24l-7 3z" fill="#2aa3ec"/></svg></div>
  <div class="app on"><svg viewBox="0 0 36 36"><rect width="36" height="36" rx="8" fill="#fff"/><rect x="11" y="5" width="21" height="26" rx="2" fill="#21a366"/><rect x="21" y="5" width="11" height="9" fill="#33c481"/><rect x="21" y="14" width="11" height="8" fill="#107c41"/><rect x="11" y="22" width="21" height="9" fill="#185c37"/><rect x="4" y="11" width="15" height="15" rx="1.500" fill="#0e6a3a"/><text x="11.500" y="22.500" class="ic-t" font-size="10.500" fill="#fff" text-anchor="middle">X</text></svg></div>
  <div class="app on"><svg viewBox="0 0 36 36"><use href="#i-preview"/></svg></div>
  <div class="app on"><svg viewBox="0 0 36 36"><use href="#i-teams"/></svg></div>
  <div class="app on"><svg viewBox="0 0 36 36"><rect width="36" height="36" rx="7" fill="#8ab"/><rect x="1.500" y="1.500" width="33" height="33" rx="6" fill="#1b1b1b"/><text x="5" y="15" class="ic-m" font-size="11" fill="#fff">&gt;_</text></svg></div>
  <div class="app on"><svg viewBox="0 0 36 36"><rect y="3" width="30" height="33" rx="6" fill="#f8f6f2"/><path d="M2 10h26M2 15h26M2 20h26M2 25h26M2 30h26" stroke="#c9d4e6"/><path d="M6 3v33" stroke="#eec4bc"/><path d="M33 -3 24 33" stroke="#7e8d9a" stroke-width="3"/><path d="M33.500 -3 24.500 33" stroke="#cfd8df" stroke-width="1"/></svg></div>
  <div class="app on"><svg viewBox="0 0 36 36"><rect width="36" height="36" rx="8" fill="#b6b6b6"/><rect x="6" y="3" width="24" height="30" rx="3" fill="#2a2a2a"/><rect x="9" y="6" width="18" height="5" fill="#555"/><g fill="#777"><circle cx="11" cy="16" r="2"/><circle cx="18" cy="16" r="2"/><circle cx="11" cy="22" r="2"/><circle cx="18" cy="22" r="2"/><circle cx="11" cy="28" r="2"/><circle cx="18" cy="28" r="2"/></g><g fill="#f58f28"><circle cx="25" cy="16" r="2"/><circle cx="25" cy="22" r="2"/><circle cx="25" cy="28" r="2"/></g></svg></div>
  <i class="dock-sep"></i>
  <div class="app"><svg viewBox="0 0 36 36"><use href="#i-folder"/></svg></div>
  <div class="app"><svg viewBox="0 0 36 36"><path d="M4 0h17l11 12v24H4z" fill="#ececec"/><path d="M21 0v12h11z" fill="#fafafa"/><text x="18" y="33" class="ic-t" font-size="6" fill="#888" text-anchor="middle">XLSX</text></svg></div>
  <div class="app"><svg viewBox="0 0 36 36"><use href="#i-folder"/></svg></div>
  <div class="app thumb"><svg viewBox="0 0 42 36"><rect width="42" height="36" fill="#fff"/><rect width="42" height="17" fill="#1d1f3e"/><path d="M5 10l3-5 3 6 3-7 3 7 3-5 3 5 3-6 3 6 3-4" fill="none" stroke="#e0457a"/><g><rect x="14" y="20" width="5" height="5" fill="#f5a623"/><rect x="20" y="20" width="5" height="5" fill="#3cc45a"/><rect x="26" y="20" width="5" height="5" fill="#e0457a"/><rect x="32" y="20" width="5" height="5" fill="#26b3c8"/><rect x="14" y="27" width="5" height="5" fill="#3cc45a"/><rect x="20" y="27" width="5" height="5" fill="#f5d33a"/><rect x="26" y="27" width="5" height="5" fill="#f5a623"/></g><use href="#i-preview" x="28" y="23" width="13" height="13"/></svg></div>
  <div class="app thumb"><svg viewBox="0 0 42 36"><rect y="2" width="42" height="31" fill="#fafafa"/><rect x="2" y="6" width="9" height="24" fill="#e4e4e4"/><path d="M14 7h22M14 11h18M14 15h22M14 19h14" stroke="#bbb"/><use href="#i-msg" x="29" y="23" width="13" height="13"/></svg></div>
  <div class="app thumb"><svg viewBox="0 0 42 36"><rect y="7" width="42" height="23" fill="#f7f7f7"/><rect y="7" width="42" height="2" fill="#5b5fc7"/><circle cx="18" cy="13" r="3" fill="#a88"/><path d="M4 13h8M4 17h8M4 21h8M22 22h14M22 25h10" stroke="#ccc"/><use href="#i-teams" x="28" y="23" width="13" height="13"/></svg></div>
  <div class="app thumb"><svg viewBox="0 0 42 36"><rect y="3" width="42" height="31" fill="#fff"/><rect y="3" width="11" height="31" fill="#3f0e40"/><path d="M14 8h24M14 11h24M14 14h24M14 17h24M14 20h20M14 23h24M14 26h12" stroke="#bbb"/><use href="#i-slack" x="27" y="23" width="13" height="13"/></svg></div>
  <div class="app thumb"><svg viewBox="0 0 42 36"><rect y="5" width="42" height="26" fill="#fafafa"/><rect x="4" y="5" width="5" height="26" fill="#ddd"/><path d="M15 10h18M15 14h22M15 18h22M15 22h16" stroke="#aaa"/><use href="#i-preview" x="28" y="23" width="13" height="13"/></svg></div>
  <div class="app thumb"><svg viewBox="0 0 42 36"><rect y="2" width="42" height="33" fill="#fff"/><circle cx="22" cy="12" r="7" fill="#6b8a2c"/><circle cx="22" cy="14" r="4" fill="#8a5a2c"/><path d="M8 23h26M8 26h26M8 29h18" stroke="#ccc"/><rect x="2" y="2" width="3" height="33" fill="#e6dcc0"/><use href="#i-preview" x="28" y="23" width="13" height="13"/></svg></div>
  <div class="app thumb"><svg viewBox="0 0 42 36"><rect y="9" width="42" height="19" fill="#f6f6f6"/><path d="M6 14h6M6 18h6M16 14h4M24 14h4M32 14h4" stroke="#9cc5e2"/><use href="#i-finder" x="28" y="19" width="13" height="17"/></svg></div>
  <div class="app thumb"><svg viewBox="0 0 42 36"><rect width="42" height="36" fill="#fdfdfd"/><path d="M3 6h8M3 9h6M3 12h10M3 26h8M3 29h10M16 14h5M24 14h5M16 28h5M24 28h5" stroke="#888"/><use href="#i-preview" x="28" y="23" width="13" height="13"/></svg></div>
  <div class="app thumb"><svg viewBox="0 0 42 36"><rect y="4" width="42" height="29" fill="#fff"/><rect y="4" width="42" height="5" fill="#222"/><path d="M6 13h22M6 16h26M6 19h20M6 22h26M6 25h14" stroke="#bbb"/><use href="#i-safari" x="28" y="23" width="13" height="13"/></svg></div>
  <div class="app thumb"><svg viewBox="0 0 42 36"><rect y="7" width="42" height="23" fill="#f4f4f4"/><rect y="7" width="42" height="2" fill="#2a86dd"/><rect x="1" y="10" width="11" height="19" fill="#46506a"/><rect x="20" y="11" width="16" height="16" fill="#f7e6b8"/><use href="#i-chrome" x="28" y="23" width="13" height="13"/></svg></div>
  <div class="app"><svg viewBox="0 0 36 36"><path d="M3 6h30l-3 28a2 2 0 0 1-2 2H8a2 2 0 0 1-2-2z" fill="#e6e6e6" opacity=".9"/><ellipse cx="18" cy="6" rx="15" ry="5" fill="#6d6d6d"/><path d="M8 5l5-3 4 4 6-4 5 4-3 2H9z" fill="#444"/><path d="M11 12l2 20M18 12v20M25 12l-2 20" stroke="#c4c4c4"/></svg></div>
</div>

</body>
</html>
```

FILE: styles.css
```css
* { box-sizing: border-box; }

html, body {
    margin: 0;
    padding: 0;
}

body {
    position: relative;
    width: 1920px;
    height: 1080px;
    overflow: hidden;
    font-family: "Inter", "Liberation Sans", sans-serif;
    background: linear-gradient(to right, #bdbdbd 0, #bdbdbd 560px, #2a1020 640px, #17070f 1300px, #0c0808 1620px, #d92a1c 1780px, #f0763a 1870px, #f4a845 1920px);
}

.sprite { position: absolute; width: 0; height: 0; }

.ic-t { font-family: "Inter", sans-serif; font-weight: 700; }
.ic-n { font-family: "Inter", sans-serif; font-weight: 400; }
.ic-q { font-family: "Liberation Serif", serif; }
.ic-m { font-family: "DejaVu Sans Mono", monospace; }

/* Menu bar */
.menubar {
    height: 24px;
    display: flex;
    align-items: center;
    padding-left: 19px;
    color: #fff;
    font-size: 13px;
    background: linear-gradient(to right, #22081b 0, #2a0c22 900px, #4a3448 1380px, #6b566b 1920px);
}

.apple { margin-right: 20px; margin-top: -2px; }

.appmenu { display: flex; gap: 20.2px; }
.appmenu b { font-weight: 700; }

.status-icons {
    margin-left: auto;
    display: flex;
    align-items: center;
    gap: 17px;
    padding-right: 17px;
}
.dots3 { font-size: 9px; letter-spacing: 0; }
.clock { margin-left: -3px; font-size: 13px; color: #f2eef2; }

/* Excel window */
.window {
    margin-top: 1px;
    height: 989px;
    display: flex;
    flex-direction: column;
    border-radius: 10px;
    overflow: hidden;
    background: #f0f0f0;
}

.titlebar {
    flex: none;
    height: 32px;
    position: relative;
    display: flex;
    align-items: center;
    padding-left: 12px;
    background: #2e8e5d;
    color: #fff;
}

.light {
    width: 13px;
    height: 13px;
    margin-right: 7px;
    border-radius: 50%;
    background: #6f9e86;
}

.autosave {
    margin-left: 20px;
    font-size: 11.5px;
    font-weight: 500;
    color: #dcebe3;
}

.toggle {
    width: 40px;
    height: 15px;
    margin-left: 5px;
    padding-left: 17px;
    border-radius: 8px;
    background: #27784f;
    font-size: 8px;
    line-height: 15px;
    letter-spacing: .5px;
    color: #7fb79a;
    position: relative;
}
.toggle i {
    position: absolute;
    left: 1px;
    top: 1px;
    width: 13px;
    height: 13px;
    border-radius: 50%;
    background: #80b99b;
}

.qa { position: absolute; top: 8px; }
.q-home { left: 201px; }
.q-save { left: 228px; top: 9px; }
.q-saveas { left: 255px; top: 9px; }
.q-undo { left: 283px; }
.q-chev { left: 305px; top: 14px; }
.q-redo { left: 321px; }
.q-more { left: 349px; top: 11px; font-size: 7px; letter-spacing: 0; line-height: 10px; }
.q-search { left: 1858px; }
.q-people { left: 1892px; }

.doc {
    position: absolute;
    left: 851px;
    top: 0;
    height: 32px;
    display: flex;
    align-items: center;
    gap: 6px;
    font-size: 13.5px;
    font-weight: 600;
    color: #e6f2eb;
}

/* Ribbon */
.ribbon {
    flex: none;
    height: 105px;
    background: linear-gradient(#f4f4f4, #ececec);
    border-bottom: 1px solid #c6c6c6;
    color: #5c5c5c;
}

.tabs {
    height: 33px;
    position: relative;
    font-size: 13px;
    font-weight: 500;
    color: #666;
}
.tabs > span { position: absolute; top: 7px; }
.t-home { left: 11px; }
.t-insert { left: 72px; }
.t-draw { left: 133px; }
.t-page { left: 190px; }
.t-form { left: 294px; }
.t-data { left: 372px; }
.t-review { left: 426px; }
.t-view { left: 496px; }
.t-tell { left: 661px; }

.tabs > .tab-btns {
    left: 1738px;
    top: 4px;
    display: flex;
    gap: 10px;
}

.rbtn {
    height: 23px;
    display: flex;
    align-items: center;
    justify-content: center;
    gap: 4px;
    padding: 0;
    background: #f9f9f9;
    border: 1px solid #e0e0e0;
    border-radius: 3px;
    font-family: inherit;
    font-size: 12.5px;
    font-weight: 500;
    color: #2a8a5a;
}
.b-share { width: 66px; }
.b-comments { width: 96px; }

.tools {
    height: 71px;
    display: flex;
    align-items: flex-start;
    font-size: 10.5px;
}

.sep {
    flex: none;
    width: 1px;
    height: 62px;
    margin-top: 1px;
    background: #cdcdcd;
}

.rb {
    flex: none;
    display: flex;
    flex-direction: column;
    align-items: center;
}
.rb svg { display: block; }
.rb label {
    margin-top: 3px;
    text-align: center;
    line-height: 12px;
    white-space: nowrap;
}
.dim { color: #b4b4b4; }

.w-getdata { width: 66px; margin-right: 2px; }
.w-picture { width: 74px; }
.w-refresh { width: 63px; }
.w-query { width: 617px; }
.w-sort { width: 38px; }
.w-filter { width: 38px; }
.w-clear { width: 86px; margin-left: 4px; }
.w-t2c { width: 43px; margin-left: 14px; }
.w-flash { width: 44px; }
.w-remove { width: 55px; }
.w-valid { width: 60px; }
.w-consol { width: 63px; }
.sep-whatif { margin-left: 11px; }
.w-whatif { width: 68px; }
.sep-group { margin-right: 8px; }
.w-group { width: 50px; }
.w-detail { width: 99px; margin-left: 3px; }
.w-analysis { width: 68px; }

.t2c-on {
    margin-top: 2px;
    background: #a4a4a4;
    border-radius: 3px;
}

.stack { display: flex; flex-direction: column; margin-top: 1px; }
.s-row {
    height: 22px;
    display: flex;
    align-items: center;
    gap: 6px;
    white-space: nowrap;
    font-size: 11px;
}
.stack-wide { margin-top: 3px; }
.stack-wide .s-row { height: 32px; gap: 5px; }

/* Formula bar */
.formula {
    flex: none;
    height: 29px;
    display: flex;
    align-items: center;
    background: #fff;
    border-bottom: 2px solid #c4c4c4;
    box-shadow: inset 0 -1px 0 #fff;
    font-size: 12px;
    color: #444;
    position: relative;
}

.namebox {
    width: 84px;
    height: 26px;
    display: flex;
    align-items: center;
    padding-left: 10px;
    background: #f8f8f8;
    border-right: 1px solid #e2e2e2;
    position: relative;
}
.stepper { position: absolute; left: 73px; top: 6px; }

.f-x { margin-left: 16px; }
.f-ok { margin-left: 18px; }
.f-fx {
    margin-left: 17px;
    width: 19px;
    border-right: 1px solid #ddd;
    font-family: "Liberation Serif", serif;
    font-style: italic;
    font-size: 15px;
    line-height: 18px;
    color: #555;
}
.f-text { margin-left: 6px; }
.f-open { margin-left: auto; margin-right: 2px; font-size: 8px; color: #666; }

/* Worksheet */
.sheet {
    flex: none;
    height: 774px;
    position: relative;
    overflow: hidden;
    background: #fff;
}

.grid {
    table-layout: fixed;
    width: 1924px;
    border-collapse: separate;
    border-spacing: 0;
    font-family: "Lato", sans-serif;
    font-size: 9.3px;
    color: #111;
}

.c-row { width: 20px; }
.c-d { width: 90px; }
.c-e { width: 93px; }
.c-f { width: 123px; }
.c-g { width: 102px; }
.c-h { width: 113px; }
.c-i { width: 110px; }
.c-j { width: 102px; }
.c-k { width: 88px; }
.c-l { width: 140px; }
.c-m { width: 207px; }
.c-n { width: 236px; }
.c-o { width: 50px; }

.grid td, .grid th {
    padding: 0 2px 0 3px;
    border-right: 1px solid #d4d4d4;
    border-bottom: 1px solid #c8c8c8;
    vertical-align: bottom;
    line-height: 12px;
    white-space: nowrap;
    overflow: hidden;
}

.grid th {
    padding-left: 3px;
    padding-right: 1px;
    background: #f1f1f1;
    font-size: 9.8px;
    font-weight: 400;
    text-align: center;
    color: #2b7a50;
    border-right: 2px solid #1d6b45;
}

.grid .head th {
    height: 21px;
    padding: 0;
    vertical-align: middle;
    background: linear-gradient(#fafafa, #f0f0f0);
    border-right: 1px solid #d8d8d8;
    border-bottom: 1px solid #bdbdbd;
    font-family: "Inter", sans-serif;
    font-size: 9.5px;
    color: #666;
}
.grid .head .corner { background: linear-gradient(to bottom right, #f4f4f4 50%, #d6d6d6 50%); }
.grid .head .head-n {
    background: #b0d6bd;
    color: #1d6b45;
    border-bottom: 2px solid #1d6b45;
}

.h15 td, .h15 th { height: 15px; }
.h30 td, .h30 th { height: 30px; }
.h46 td, .h46 th { height: 46px; }
.h61 td, .h61 th { height: 61px; }

.num { text-align: right; }
.mid { text-align: center; }
.grid .cur { text-align: right; padding-right: 5px; }
.cur span { float: left; margin-left: 3px; }

.names td { text-align: center; font-weight: 700; }

.grid .sel {
    background: #c4c4c4;
    border-left: 2px solid #1d6b45;
    border-right: 2px solid #1d6b45;
    border-bottom-color: #adadad;
}
.grid .first { background: #fff; }

.grid .rest {
    padding: 0;
    background: repeating-linear-gradient(to right, transparent 0, transparent 49px, #d4d4d4 49px, #d4d4d4 50px);
    border-right: 0;
}

.fill-handle {
    position: absolute;
    left: 1420px;
    top: 19px;
    width: 5px;
    height: 5px;
    background: #1d6b45;
}

.scroll-thumb {
    position: absolute;
    left: 1910px;
    top: 23px;
    width: 6px;
    height: 17px;
    border-radius: 3px;
    background: #9a9a9a;
}

/* Sheet tabs */
.tabbar {
    flex: none;
    height: 26px;
    display: flex;
    background: #ececec;
    border-top: 1px solid #c6c6c6;
    position: relative;
}
.tab-nav { position: absolute; left: 14px; top: 8px; }
.sheet-tab {
    margin-left: 61px;
    width: 78px;
    height: 22px;
    text-align: center;
    background: #fff;
    border-bottom: 1px solid #bbb;
    box-shadow: 0 1px 1px rgba(0, 0, 0, .15);
    font-size: 12px;
    font-weight: 600;
    line-height: 23px;
    color: #1f7a4d;
}
.sheet-add {
    width: 39px;
    text-align: center;
    border-right: 1px solid #d0d0d0;
    font-size: 18px;
    line-height: 24px;
    color: #555;
}

/* Status bar */
.statusbar {
    flex: none;
    height: 23px;
    display: flex;
    align-items: center;
    padding-left: 25px;
    padding-right: 25px;
    border-top: 1px solid #a8a8a8;
    background: linear-gradient(#ededed, #d9d9d9);
    font-size: 12px;
    color: #666;
}
.statusbar > svg { margin-left: 20px; }
.ready { width: 34px; }
.count { margin-left: auto; margin-right: 10px; color: #555; }
.view {
    width: 36.5px;
    height: 22px;
    display: flex;
    align-items: center;
    justify-content: center;
}
.view svg { transform: scale(.9); }
.view.on { background: #a4a4a4; }

.zoom-minus, .zoom-plus {
    flex: none;
    position: relative;
    width: 8px;
    height: 2px;
    margin-left: 7px;
    background: #666;
}
.zoom-plus::after {
    content: "";
    position: absolute;
    left: 3px;
    top: -3px;
    width: 2px;
    height: 8px;
    background: #666;
}
.slider {
    flex: none;
    width: 100px;
    height: 5px;
    margin-left: 7px;
    border-radius: 3px;
    background: #aaa;
    position: relative;
}
.slider i {
    position: absolute;
    left: 40px;
    top: -5px;
    width: 15px;
    height: 15px;
    border-radius: 50%;
    background: #f6f6f6;
    box-shadow: 0 0 2px rgba(0, 0, 0, .5);
}
.zoom-val { margin-left: 18px; color: #555; }

/* Wizard dialog */
.dialog {
    position: absolute;
    left: 245px;
    top: 66px;
    width: 582px;
    height: 446px;
    background: #ece9e9;
    border-radius: 10px;
    box-shadow: 0 0 0 1px rgba(0, 0, 0, .12), 0 18px 45px rgba(0, 0, 0, .42);
    color: #3a3a3a;
    font-size: 13px;
}

.dlg-title {
    height: 30px;
    border-bottom: 1px solid #c8c6c6;
    text-align: center;
    font-weight: 700;
    font-size: 13.1px;
    line-height: 29px;
}

.dlg-body { padding: 0 20px; }

.dlg-body p { margin: 0; line-height: 16px; }
.dlg-body .dlg-head { margin-top: 24px; font-size: 13.1px; font-weight: 700; }
.dlg-body .dlg-label { margin-top: 15px; }
.dlg-body .preview-label { margin-top: 18px; }

.dlg-options { display: flex; margin-top: 4px; }
.col-left { width: 269px; }
.col-right { padding-top: 3px; }

.opt {
    height: 24px;
    display: flex;
    align-items: center;
}

.check {
    flex: none;
    width: 14px;
    height: 14px;
    margin-right: 6px;
    background: #fff;
    border-radius: 3px;
    box-shadow: 0 0 1px rgba(0, 0, 0, .55);
}
.check svg { display: block; }
.check.checked { background: #0f7144; box-shadow: none; }
.col-right .check { margin-right: 6px; }
.col-right .opt { font-size: 12.8px; }

.other-input {
    width: 25px;
    height: 22px;
    margin-left: 6px;
    padding-left: 4px;
    border: 3px solid #72a68d;
    border-radius: 2px;
    background: #fff;
    line-height: 16px;
    position: relative;
}
.other-input i {
    position: absolute;
    left: 4px;
    top: 1px;
    width: 1px;
    height: 14px;
    background: #111;
}

.qual { gap: 7px; }
.select {
    width: 95px;
    height: 20px;
    padding-left: 9px;
    background: #fff;
    border-radius: 5px;
    box-shadow: 0 0 1px rgba(0, 0, 0, .5), 0 1px 1px rgba(0, 0, 0, .15);
    font-size: 12px;
    line-height: 18px;
    position: relative;
}
.select-btn {
    position: absolute;
    right: 2px;
    top: 2px;
    width: 16px;
    height: 16px;
    display: flex;
    align-items: center;
    justify-content: center;
    background: #0f7144;
    border-radius: 4px;
}

.preview {
    position: relative;
    width: 541px;
    height: 128px;
    margin-top: 9px;
    background: #f3f1f1;
}
.pv-area {
    width: 530px;
    height: 118px;
    padding-top: 22px;
    padding-left: 1px;
    background: #fff;
}
.pv-table {
    display: flex;
    height: 96px;
    border: 1px solid #111;
    border-bottom: 1px solid #ccc;
    padding-top: 2px;
    font-family: "DejaVu Sans Mono", monospace;
    font-size: 8.2px;
    line-height: 11px;
    color: #222;
    white-space: nowrap;
}
.pv-first {
    width: 125px;
    margin-top: -2px;
    padding-top: 2px;
    border-right: 1px solid #111;
}
.pv-thumb {
    position: absolute;
    left: 533px;
    top: 3px;
    width: 5px;
    height: 14px;
    border-radius: 3px;
    background: #aaa;
}

.dlg-buttons {
    display: flex;
    justify-content: flex-end;
    gap: 12px;
    margin-top: 10px;
}
.btn {
    width: 72px;
    height: 20px;
    padding: 0;
    border: 0;
    border-radius: 5px;
    background: #fff;
    box-shadow: 0 0 1px rgba(0, 0, 0, .5), 0 1px 1px rgba(0, 0, 0, .15);
    font-family: inherit;
    font-size: 13px;
    color: #3a3a3a;
}
.btn.next {
    background: linear-gradient(#1a8a58, #0b6d40);
    color: #fff;
    font-weight: 600;
}

/* Dock */
.dock {
    position: absolute;
    left: 39px;
    top: 1016px;
    width: 1841px;
    height: 59px;
    display: flex;
    gap: 12.4px;
    padding: 9px 0 0 9px;
    border-radius: 11px;
    background: linear-gradient(to right, #d6d6d6 0, #d3d3d3 500px, #c8a8a0 570px, #6a5068 640px, #725a72 1160px, #7a6a70 1260px, #8c8a80 1440px, #5c5a58 1620px, #7a5a60 1710px, #e85a5a 1770px, #f08060 1841px);
    box-shadow: inset 0 0 0 1px rgba(255, 255, 255, .25);
}

.app {
    flex: none;
    position: relative;
    width: 36px;
    height: 36px;
}
.app svg { display: block; width: 36px; height: 36px; overflow: visible; }
.app.on::after {
    content: "";
    position: absolute;
    left: 16px;
    top: 44px;
    width: 4px;
    height: 4px;
    border-radius: 50%;
    background: #1c1c1c;
}

.app.thumb svg { width: 42px; margin-left: -3px; }

.dock-sep {
    flex: none;
    width: 1px;
    height: 44px;
    margin: 0 4.3px;
    background: #332a33;
}

.badge {
    position: absolute;
    left: 25px;
    top: -5px;
    width: 17px;
    height: 17px;
    border-radius: 50%;
    background: #f23a3a;
    color: #fff;
    font-size: 10.5px;
    font-weight: 600;
    line-height: 17px;
    text-align: center;
}
```
